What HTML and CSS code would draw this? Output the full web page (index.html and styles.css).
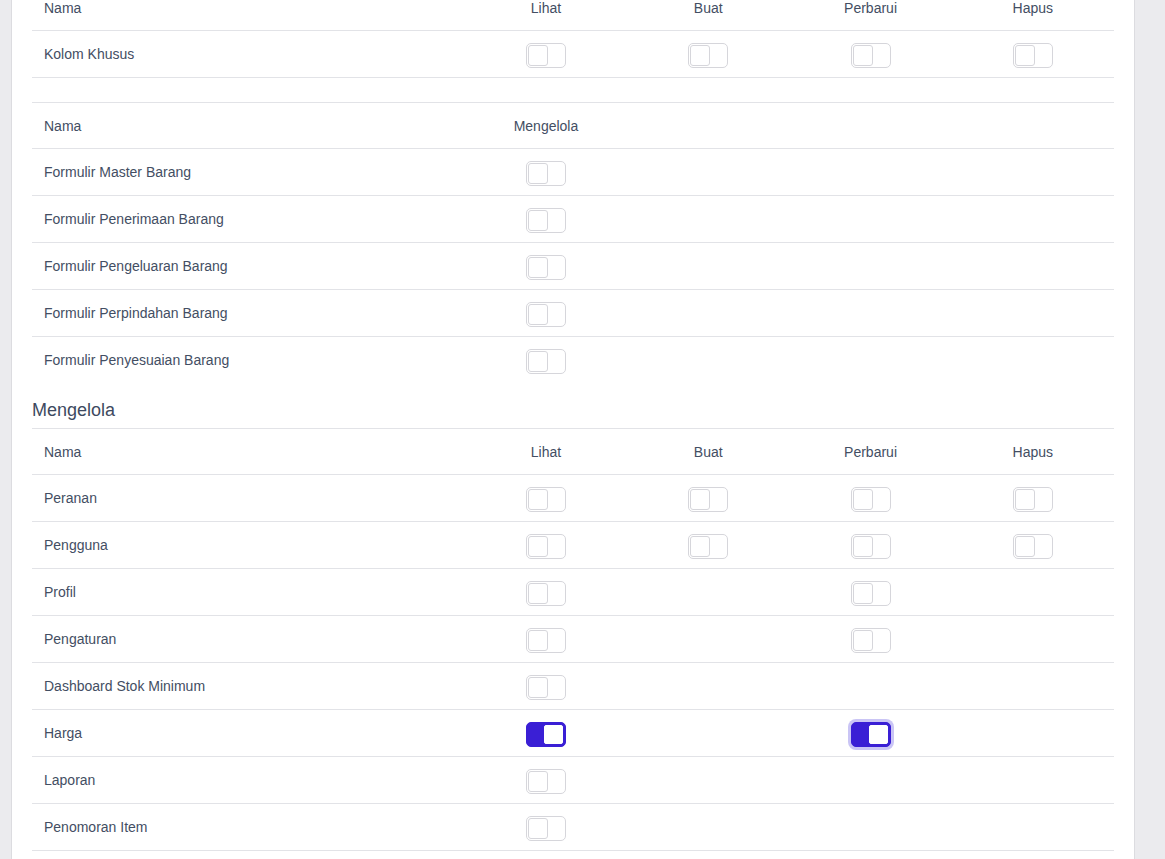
FILE: index.html
```html
<!DOCTYPE html>
<html lang="id">
<head>
    <meta charset="UTF-8">
    <meta name="viewport" content="width=device-width, initial-scale=1.0">
    <title>Hak Akses Peranan</title>
    <link rel="stylesheet" href="styles.css">
</head>
<body>

    <div class="page">
        <div class="card">

            <table class="perm-table first">
                <colgroup><col class="col-name"><col><col><col><col></colgroup>
                <thead>
                    <tr>
                        <th class="name">Nama</th>
                        <th>Lihat</th>
                        <th>Buat</th>
                        <th>Perbarui</th>
                        <th>Hapus</th>
                    </tr>
                </thead>
                <tbody>
                    <tr>
                        <td class="name">Kolom Khusus</td>
                        <td><span class="toggle"></span></td>
                        <td><span class="toggle"></span></td>
                        <td><span class="toggle"></span></td>
                        <td><span class="toggle"></span></td>
                    </tr>
                </tbody>
            </table>

            <table class="perm-table">
                <colgroup><col class="col-name"><col><col><col><col></colgroup>
                <thead>
                    <tr>
                        <th class="name">Nama</th>
                        <th>Mengelola</th>
                        <th></th>
                        <th></th>
                        <th></th>
                    </tr>
                </thead>
                <tbody>
                    <tr><td class="name">Formulir Master Barang</td><td><span class="toggle"></span></td><td></td><td></td><td></td></tr>
                    <tr><td class="name">Formulir Penerimaan Barang</td><td><span class="toggle"></span></td><td></td><td></td><td></td></tr>
                    <tr><td class="name">Formulir Pengeluaran Barang</td><td><span class="toggle"></span></td><td></td><td></td><td></td></tr>
                    <tr><td class="name">Formulir Perpindahan Barang</td><td><span class="toggle"></span></td><td></td><td></td><td></td></tr>
                    <tr><td class="name">Formulir Penyesuaian Barang</td><td><span class="toggle"></span></td><td></td><td></td><td></td></tr>
                </tbody>
            </table>

            <h3 class="section-title">Mengelola</h3>

            <table class="perm-table last">
                <colgroup><col class="col-name"><col><col><col><col></colgroup>
                <thead>
                    <tr>
                        <th class="name">Nama</th>
                        <th>Lihat</th>
                        <th>Buat</th>
                        <th>Perbarui</th>
                        <th>Hapus</th>
                    </tr>
                </thead>
                <tbody>
                    <tr>
                        <td class="name">Peranan</td>
                        <td><span class="toggle"></span></td>
                        <td><span class="toggle"></span></td>
                        <td><span class="toggle"></span></td>
                        <td><span class="toggle"></span></td>
                    </tr>
                    <tr>
                        <td class="name">Pengguna</td>
                        <td><span class="toggle"></span></td>
                        <td><span class="toggle"></span></td>
                        <td><span class="toggle"></span></td>
                        <td><span class="toggle"></span></td>
                    </tr>
                    <tr>
                        <td class="name">Profil</td>
                        <td><span class="toggle"></span></td>
                        <td></td>
                        <td><span class="toggle"></span></td>
                        <td></td>
                    </tr>
                    <tr>
                        <td class="name">Pengaturan</td>
                        <td><span class="toggle"></span></td>
                        <td></td>
                        <td><span class="toggle"></span></td>
                        <td></td>
                    </tr>
                    <tr>
                        <td class="name">Dashboard Stok Minimum</td>
                        <td><span class="toggle"></span></td>
                        <td></td><td></td><td></td>
                    </tr>
                    <tr>
                        <td class="name">Harga</td>
                        <td><span class="toggle on"></span></td>
                        <td></td>
                        <td><span class="toggle on focus"></span></td>
                        <td></td>
                    </tr>
                    <tr>
                        <td class="name">Laporan</td>
                        <td><span class="toggle"></span></td>
                        <td></td><td></td><td></td>
                    </tr>
                    <tr>
                        <td class="name">Penomoran Item</td>
                        <td><span class="toggle"></span></td>
                        <td></td><td></td><td></td>
                    </tr>
                </tbody>
            </table>

        </div>
    </div>

</body>
</html>
```

FILE: styles.css
```css
body {
    margin: 0;
    font-family: "Liberation Sans", Arial, sans-serif;
    background-color: #ebebee;
    color: #434e63;
    height: 859px;
    overflow: hidden;
}
.page {
    padding: 0 30px 0 11px;
}
.card {
    background-color: white;
    border-left: 1px solid #dcdce0;
    border-right: 1px solid #dcdce0;
    padding: 0 20px 40px;
    margin-top: -16px;
}
.perm-table {
    width: 100%;
    border-collapse: collapse;
    table-layout: fixed;
    font-size: 14px;
}
.perm-table .col-name {
    width: 40%;
}
.perm-table th,
.perm-table td {
    height: 46px;
    padding: 0 12px;
    border-top: 1px solid #e2e3e7;
    text-align: center;
    font-weight: 400;
    vertical-align: middle;
}
.perm-table th {
    height: 45px;
}
.perm-table .name {
    text-align: left;
}
.perm-table.first {
    margin-bottom: 24px;
}
.perm-table.first tbody tr:last-child td,
.perm-table.last tbody tr:last-child td {
    border-bottom: 1px solid #e2e3e7;
}
.section-title {
    font-size: 18px;
    font-weight: 400;
    line-height: 24px;
    margin: 15px 0 6px;
    color: #3d4960;
}
/* switch look */
.toggle {
    display: inline-block;
    position: relative;
    width: 38px;
    height: 23px;
    border: 1px solid #d6d6db;
    border-radius: 5px;
    vertical-align: middle;
    margin-top: 2px;
}
.toggle::after {
    content: "";
    position: absolute;
    left: 1px;
    top: 1px;
    width: 18px;
    height: 19px;
    border: 1px solid #d6d6db;
    border-radius: 3px;
    background: white;
}
.toggle.on {
    background-color: #3a1fd5;
    border-color: #3a1fd5;
}
.toggle.on::after {
    left: auto;
    right: 2px;
    top: 2px;
    width: 17px;
    height: 17px;
    border: 1px solid white;
    border-radius: 2px;
}
.toggle.focus {
    box-shadow: 0 0 0 3px #cac5f5;
}
```
